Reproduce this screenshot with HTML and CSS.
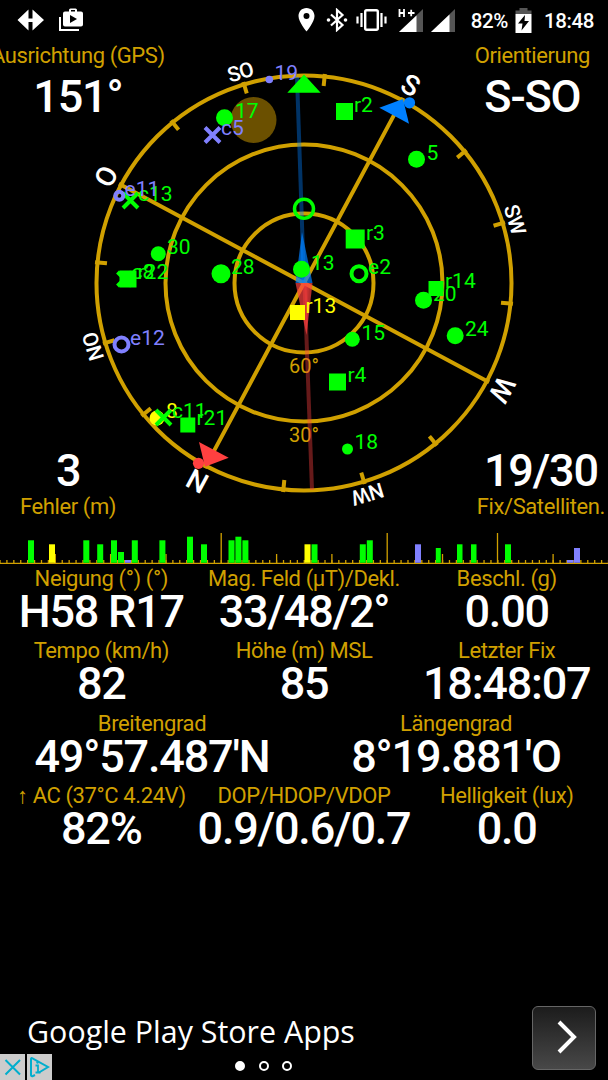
FILE: index.html
```html
<!DOCTYPE html>
<html lang="de">

<head>
  <meta charset="UTF-8">
  <meta name="viewport" content="width=device-width, initial-scale=1.0">
  <title>GPS Status</title>
  <link rel="stylesheet" href="styles.css">
</head>

<body>
  <!-- Status Bar -->
  <header class="status-bar">
    <svg class="icon-arrows" width="28" height="22" viewBox="0 0 28 22">
      <path d="M11.500 0.500v9h4v-9L27 11L15.500 21.500v-8.500h-4v8.500L0.500 11z" fill="#fff" />
    </svg>
    <svg class="icon-play" width="25" height="24" viewBox="0 0 25 24">
      <path d="M1 9v13h19" fill="none" stroke="#fff" stroke-width="2" />
      <path d="M6 3.500h4V2Q10 0.500 11.500 0.500h5Q18 0.500 18 2V3.500h4q2 0 2 2v11q0 2-2 2H6q-2 0-2-2V5.500q0-2 2-2zM12 3.500h4V2h-4zM11 7v8l7-4z" fill="#fff" fill-rule="evenodd" />
    </svg>
    <div class="status-right">
      <svg class="icon-pin" width="17" height="24" viewBox="0 0 17 24">
        <path d="M8.500 0C3.800 0 0.500 3.600 0.500 8c0 6 8 15.500 8 15.500s8-9.500 8-15.500c0-4.400-3.300-8-8-8zM8.500 5a3 3 0 0 1 0 6a3 3 0 0 1 0-6z" fill="#fff" fill-rule="evenodd" />
      </svg>
      <svg class="icon-bluetooth" width="22" height="24" viewBox="0 0 22 24">
        <path d="M5 6.500l11.500 10.500L11 22V2l5.500 5L5 17.500" fill="none" stroke="#fff" stroke-width="2.200" />
        <circle cx="2.500" cy="12" r="1.800" fill="#fff" />
        <circle cx="19.500" cy="12" r="1.800" fill="#fff" />
      </svg>
      <svg class="icon-vibrate" width="31" height="24" viewBox="0 0 31 24">
        <rect x="9.200" y="2.200" width="12.600" height="19.600" rx="1.500" fill="none" stroke="#fff" stroke-width="2.400" />
        <path d="M5.500 5v14M25.500 5v14M1.500 8.500v7M29.500 8.500v7" stroke="#fff" stroke-width="2.200" />
      </svg>
      <svg class="icon-signal" width="26" height="26" viewBox="0 0 26 26">
        <path d="M25 2v23H1z" fill="#555" />
        <path d="M18.500 8.500V25H1z" fill="#fff" />
        <path d="M1.500 2v8M6.500 2v8M1.500 6H6.500M9.500 6h7M13 2.500v7" fill="none" stroke="#000" stroke-width="4" />
        <path d="M1.500 2v8M6 2v8M1.500 6H6M10 6h6.500M13.200 2.800v6.500" fill="none" stroke="#fff" stroke-width="1.800" />
      </svg>
      <svg class="icon-signal-two" width="26" height="26" viewBox="0 0 26 26">
        <path d="M25 2v23H1z" fill="#555" />
        <path d="M19.500 7.500V25H1z" fill="#fff" />
      </svg>
      <span class="battery-text">82%</span>
      <svg class="icon-battery" width="17" height="25" viewBox="0 0 17 25">
        <path d="M4.500 0h8v2.500H16.500V6H0.500V2.500h4z" fill="#555" />
        <path d="M0.500 6h16v19h-16zM10 7l-7 8.500h4.500l-1 7L14 13H9.500z" fill="#fff" fill-rule="evenodd" />
      </svg>
      <span class="clock">18:48</span>
    </div>
  </header>

  <!-- Sky View -->
  <section class="sky">
    <svg class="sky-plot" width="608" height="485" viewBox="0 40 608 485">
      <g class="grid">
        <circle cx="304" cy="283" r="207.500" />
        <circle cx="304" cy="283" r="138.500" />
        <circle cx="304" cy="283" r="69.500" />
        <g transform="rotate(-151.800 304 283)">
          <path d="M304 73V493M94 283H514" />
          <path d="M304 73v12" transform="rotate(22.500 304 283)" />
          <path d="M304 73v12" transform="rotate(45 304 283)" />
          <path d="M304 73v12" transform="rotate(67.500 304 283)" />
          <path d="M304 73v12" transform="rotate(112.500 304 283)" />
          <path d="M304 73v12" transform="rotate(135 304 283)" />
          <path d="M304 73v12" transform="rotate(157.500 304 283)" />
          <path d="M304 73v12" transform="rotate(202.500 304 283)" />
          <path d="M304 73v12" transform="rotate(225 304 283)" />
          <path d="M304 73v12" transform="rotate(247.500 304 283)" />
          <path d="M304 73v12" transform="rotate(292.500 304 283)" />
          <path d="M304 73v12" transform="rotate(315 304 283)" />
          <path d="M304 73v12" transform="rotate(337.500 304 283)" />
        </g>
      </g>

      <g class="elevation">
        <text x="304" y="373">60°</text>
        <text x="304" y="442">30°</text>
      </g>

      <g class="points">
        <text class="major" x="304" y="68" transform="rotate(-151.800 304 283)">N</text>
        <text class="major" x="304" y="68" transform="rotate(-61.800 304 283)">O</text>
        <text class="major" x="304" y="68" transform="rotate(28.200 304 283)">S</text>
        <text class="major" x="304" y="68" transform="rotate(118.200 304 283)">W</text>
        <text x="304" y="70" transform="rotate(-106.800 304 283)">NO</text>
        <text x="304" y="70" transform="rotate(-16.800 304 283)">SO</text>
        <text x="304" y="70" transform="rotate(73.200 304 283)">SW</text>
        <text x="304" y="70" transform="rotate(163.200 304 283)">NW</text>
      </g>

      <!-- Sun -->
      <circle cx="253.500" cy="120" r="23" fill="#6b5000" />

      <!-- Needle -->
      <path d="M297 77L304 283" stroke="#0080ff" stroke-opacity="0.400" stroke-width="4" />
      <path d="M304.500 283L312 490" stroke="#ff4040" stroke-opacity="0.400" stroke-width="4" />
      <path d="M295.500 283L302 232L312.500 283z" fill="#0080ff" fill-opacity="0.700" />
      <path d="M295.500 283L306.500 335L312.500 283z" fill="#ff4040" fill-opacity="0.700" />
      <path d="M299 283L302 232L304 283z" fill="#0080ff" fill-opacity="0.300" />
      <path d="M304 283L306.500 335L309 283z" fill="#ff4040" fill-opacity="0.300" />

      <!-- Markers -->
      <path d="M304 74.500L320.700 92.700H287.300z" fill="#0f0" />
      <path d="M379.300 107.700L409 123.700L403 99z" fill="#0080ff" />
      <circle cx="409.500" cy="102.800" r="5.600" fill="#0080ff" />
      <path d="M199 442L228.700 457.700L205 466.700z" fill="#ff4040" />
      <circle cx="198.500" cy="463.300" r="5.600" fill="#ff4040" />
      <circle cx="304" cy="208.700" r="9.500" fill="none" stroke="#0f0" stroke-width="3.500" />

      <!-- Satellites in use -->
      <g class="used">
        <circle cx="224.500" cy="117.700" r="8.500" />
        <text x="235" y="118">17</text>
        <rect x="336" y="103" width="17" height="17" />
        <text x="354" y="111.500">r2</text>
        <circle cx="416.500" cy="159.300" r="8.500" />
        <text x="426.500" y="159.500">5</text>
        <rect x="345.700" y="229.500" width="19" height="19" />
        <text x="366" y="239.500">r3</text>
        <circle cx="301.500" cy="269.300" r="8.500" />
        <text x="311" y="269.500">13</text>
        <circle class="ring" cx="359" cy="273.700" r="7.500" />
        <text x="368" y="274">e2</text>
        <circle cx="158.300" cy="253.700" r="7.500" />
        <text x="167" y="254">30</text>
        <circle cx="221" cy="273.700" r="9.500" />
        <text x="231" y="274">28</text>
        <path class="cross" d="M123 193l15 15M138 193l-15 15" />
        <text x="138" y="201">c13</text>
        <path class="cross" d="M117.500 272l14 14M131.500 272l-14 14" />
        <rect x="119.500" y="270.500" width="17" height="17" />
        <text x="131.500" y="279">c8</text>
        <text x="137.500" y="279">r22</text>
        <rect x="428.500" y="281" width="15" height="15" />
        <text x="445" y="288">r14</text>
        <circle cx="423.500" cy="300.300" r="8.500" />
        <text x="433" y="300.500">20</text>
        <circle cx="455.200" cy="335.700" r="8.500" />
        <text x="465" y="336">24</text>
        <circle cx="352.300" cy="339.300" r="7.500" />
        <text x="361.500" y="339.500">15</text>
        <rect x="329" y="373.500" width="17" height="17" />
        <text x="347.500" y="381.500">r4</text>
        <circle cx="347.500" cy="449" r="5.500" />
        <text x="354.500" y="449">18</text>
      </g>

      <g class="weak">
        <rect x="290" y="305" width="15" height="15" />
        <text x="305.500" y="312.500">r13</text>
        <circle cx="157" cy="418" r="7.500" />
        <text x="166" y="418">8</text>
      </g>

      <g class="used">
        <path class="cross" d="M156 410l15 15M171 410l-15 15" />
        <text x="172" y="417.500">c11</text>
        <rect x="180.300" y="417.500" width="15" height="15" />
        <text x="196.500" y="425">r21</text>
      </g>

      <g class="unused">
        <circle cx="269.300" cy="79.500" r="3.800" />
        <text x="274.500" y="79.500">19</text>
        <path class="cross" d="M205 127.500l15 15M220 127.500l-15 15" />
        <text x="221" y="135">c5</text>
        <circle class="ring" cx="119.300" cy="195.700" r="4" />
        <text x="124.500" y="196">e11</text>
        <circle class="ring" cx="121.500" cy="344.500" r="7" />
        <text x="130" y="345">e12</text>
      </g>
    </svg>

    <div class="corner top-left">
      <p class="label">Ausrichtung (GPS)</p>
      <p class="value">151°</p>
    </div>
    <div class="corner top-right">
      <p class="label">Orientierung</p>
      <p class="value">S-SO</p>
    </div>
    <div class="corner bottom-left">
      <p class="value">3</p>
      <p class="label">Fehler (m)</p>
    </div>
    <div class="corner bottom-right">
      <p class="value">19/30</p>
      <p class="label">Fix/Satelliten.</p>
    </div>
  </section>

  <!-- Signal Strength -->
  <svg class="signal-graph" width="608" height="40" viewBox="0 525 608 40">
    <path class="small-ticks" d="M0 561.500H608" />
    <path class="medium-ticks" d="M55.300 554v9M110.600 554v9M166 554v9M276.600 554v9M331.900 554v9M442.500 554v9M553.100 554v9" />
    <path class="large-ticks" d="M221.200 533v30M387.200 533v30M497.500 533v30" />
    <path class="axis" d="M0 563.300H608" />
    <g fill="#0f0">
      <rect x="28" y="540.300" width="6" height="22.500" />
      <rect x="83.300" y="540.300" width="6" height="22.500" />
      <rect x="97.200" y="544.300" width="6" height="18.500" />
      <rect x="111" y="540.300" width="6" height="22.500" />
      <rect x="118" y="552" width="6" height="10.800" />
      <rect x="131.800" y="540.300" width="6" height="22.500" />
      <rect x="159.400" y="540.300" width="6" height="22.500" />
      <rect x="187" y="536.700" width="6" height="26.100" />
      <rect x="201" y="544.300" width="6" height="18.500" />
      <rect x="228.500" y="540.300" width="6" height="22.500" />
      <rect x="235.400" y="536.700" width="6" height="26.100" />
      <rect x="242.400" y="540.300" width="6" height="22.500" />
      <rect x="311.500" y="544.300" width="6" height="18.500" />
      <rect x="359.800" y="544.300" width="6" height="18.500" />
      <rect x="366.800" y="540.300" width="6" height="22.500" />
      <rect x="435.800" y="548" width="5" height="14.800" />
      <rect x="457" y="544.300" width="5.500" height="18.500" />
      <rect x="471" y="544.300" width="5.500" height="18.500" />
      <rect x="505" y="544.300" width="6" height="18.500" />
    </g>
    <g fill="#ff0">
      <rect x="49" y="544.300" width="6" height="18.500" />
      <rect x="304.500" y="544.300" width="6" height="18.500" />
    </g>
    <g fill="#8080ff">
      <rect x="125" y="560" width="6" height="2.800" />
      <rect x="415" y="544.300" width="6" height="18.500" />
      <rect x="567" y="560" width="6.500" height="2.800" />
      <rect x="574" y="548" width="6" height="14.800" />
    </g>
  </svg>

  <!-- Readouts -->
  <main class="readouts">
    <div class="row">
      <div class="cell">
        <p class="label">Neigung (°) (°)</p>
        <p class="value">H58 R17</p>
      </div>
      <div class="cell">
        <p class="label">Mag. Feld (µT)/Dekl.</p>
        <p class="value">33/48/2°</p>
      </div>
      <div class="cell">
        <p class="label">Beschl. (g)</p>
        <p class="value">0.00</p>
      </div>
    </div>
    <div class="row">
      <div class="cell">
        <p class="label">Tempo (km/h)</p>
        <p class="value">82</p>
      </div>
      <div class="cell">
        <p class="label">Höhe (m) MSL</p>
        <p class="value">85</p>
      </div>
      <div class="cell">
        <p class="label">Letzter Fix</p>
        <p class="value">18:48:07</p>
      </div>
    </div>
    <div class="row">
      <div class="cell">
        <p class="label">Breitengrad</p>
        <p class="value">49°57.487'N</p>
      </div>
      <div class="cell">
        <p class="label">Längengrad</p>
        <p class="value">8°19.881'O</p>
      </div>
    </div>
    <div class="row">
      <div class="cell">
        <p class="label">↑ AC (37°C 4.24V)</p>
        <p class="value">82%</p>
      </div>
      <div class="cell">
        <p class="label">DOP/HDOP/VDOP</p>
        <p class="value">0.9/0.6/0.7</p>
      </div>
      <div class="cell">
        <p class="label">Helligkeit (lux)</p>
        <p class="value">0.0</p>
      </div>
    </div>
  </main>

  <!-- Ad Banner -->
  <footer class="ad">
    <span class="ad-title">Google Play Store Apps</span>
    <button class="ad-button">
      <svg width="20" height="34" viewBox="0 0 20 34">
        <path d="M2 2L17 17L2 32" fill="none" stroke="#fff" stroke-width="4" />
      </svg>
    </button>
    <div class="ad-choices">
      <svg width="25" height="26" viewBox="0 0 25 26">
        <rect width="25" height="26" fill="#ccc" />
        <path d="M5.500 6L20 20.500M20 6L5.500 20.500" stroke="#00aecd" stroke-width="2" />
      </svg>
      <svg width="25" height="26" viewBox="0 0 25 26">
        <rect width="25" height="26" fill="#ccc" />
        <path d="M8 21l-2.500 1.200Q4 22.500 4 21V5Q4 3.500 5.500 4.300L21 13L12 18.500" fill="none" stroke="#00aecd" stroke-width="2" />
        <path d="M8.500 11.500h2.500v7M8.500 18.500h5" fill="none" stroke="#00aecd" stroke-width="1.800" />
        <circle cx="10.500" cy="8.500" r="1.200" fill="#00aecd" />
      </svg>
    </div>
    <div class="dots">
      <span class="dot active"></span>
      <span class="dot"></span>
      <span class="dot"></span>
    </div>
  </footer>
</body>

</html>
```
FILE: styles.css
```css
body {
  margin: 0;
  background-color: #000;
  color: #fff;
  font-family: Roboto, sans-serif;
  display: flex;
  flex-direction: column;
  height: 1080px;
  overflow: hidden;
}

p {
  margin: 0;
}

.label {
  font-size: 22px;
  line-height: 26px;
  letter-spacing: -0.4px;
  color: #d0a000;
  white-space: nowrap;
}

.value {
  font-size: 45px;
  line-height: 46px;
  letter-spacing: -1.2px;
  font-weight: 500;
  white-space: nowrap;
}

/* Status bar */
.status-bar {
  display: flex;
  align-items: center;
  height: 40px;
  padding: 0 14px 0 17px;
  font-size: 20.5px;
  letter-spacing: -0.4px;
  font-weight: 500;
}

.icon-play {
  margin-left: 14px;
}

.status-right {
  display: flex;
  align-items: center;
  margin-left: auto;
}

.status-right span {
  padding-top: 2px;
}

.icon-bluetooth {
  margin-left: 11px;
}

.icon-vibrate {
  margin-left: 8px;
}

.icon-signal {
  margin-left: 11px;
}

.icon-signal-two {
  margin-left: 6px;
}

.battery-text {
  margin-left: 15px;
}

.icon-battery {
  margin-left: 7px;
}

.clock {
  margin-left: 12px;
}

/* Sky view */
.sky {
  position: relative;
  height: 485px;
}

.sky-plot {
  display: block;
}

.sky-plot text {
  font-size: 21px;
}

.grid {
  fill: none;
  stroke: #d0a000;
  stroke-width: 4;
}

.sky-plot .elevation text {
  fill: #d0a000;
  font-size: 20px;
  text-anchor: middle;
}

.points text {
  fill: #fff;
  font-weight: 500;
  letter-spacing: -0.7px;
  text-anchor: middle;
}

.sky-plot .major {
  font-size: 28px;
}

.used {
  fill: #0f0;
  stroke: none;
}

.used .ring,
.used .cross {
  fill: none;
  stroke: #0f0;
  stroke-width: 4;
}

.weak {
  fill: #ff0;
}

.unused {
  fill: #8080ff;
}

.unused .ring,
.unused .cross {
  fill: none;
  stroke: #8080ff;
  stroke-width: 4;
}

.corner {
  position: absolute;
  text-align: center;
}

.top-left {
  top: 3px;
  left: -9px;
}

.top-right {
  top: 3px;
  right: 18px;
}

.top-left .value,
.top-right .value {
  margin-top: 5px;
}

.bottom-left {
  bottom: 5px;
  left: 20px;
}

.bottom-right {
  bottom: 5px;
  right: 3px;
}

/* Signal strength */
.signal-graph {
  display: block;
  flex: none;
}

.axis {
  stroke: #d0a000;
  stroke-width: 1.3;
}

.small-ticks {
  stroke: #d0a000;
  stroke-width: 3;
  stroke-dasharray: 1.3 5.615;
  stroke-dashoffset: 0.65;
}

.medium-ticks,
.large-ticks {
  stroke: #d0a000;
  stroke-width: 1.3;
}

/* Readouts */
.readouts {
  padding-top: 1px;
}

.row {
  display: flex;
  height: 72.3px;
}

.cell {
  flex: 1 1 0;
  min-width: 0;
  display: flex;
  flex-direction: column;
  align-items: center;
}

.cell .value {
  margin-top: -3px;
}

/* Ad banner */
.ad {
  position: relative;
  display: flex;
  align-items: center;
  justify-content: space-between;
  height: 84px;
  margin-top: auto;
  padding: 0 12px 0 27px;
  box-sizing: border-box;
}

.ad-title {
  font-family: "Open Sans", sans-serif;
  font-size: 30.4px;
  padding-bottom: 13px;
}

.ad-button {
  display: flex;
  align-items: center;
  justify-content: center;
  width: 64px;
  height: 64px;
  padding: 0 0 2px 5px;
  border: 1px solid #666;
  border-radius: 6px;
  background: linear-gradient(#1c1c1c, #484848);
}

.ad-choices {
  position: absolute;
  left: 0;
  bottom: 0;
  display: flex;
  gap: 2px;
}

.ad-choices svg {
  display: block;
}

.dots {
  position: absolute;
  left: 235px;
  bottom: 9px;
  display: flex;
  gap: 13.6px;
}

.dot {
  box-sizing: border-box;
  width: 10px;
  height: 10px;
  border: 2px solid #fff;
  border-radius: 50%;
}

.dot.active {
  background-color: #fff;
}
```
